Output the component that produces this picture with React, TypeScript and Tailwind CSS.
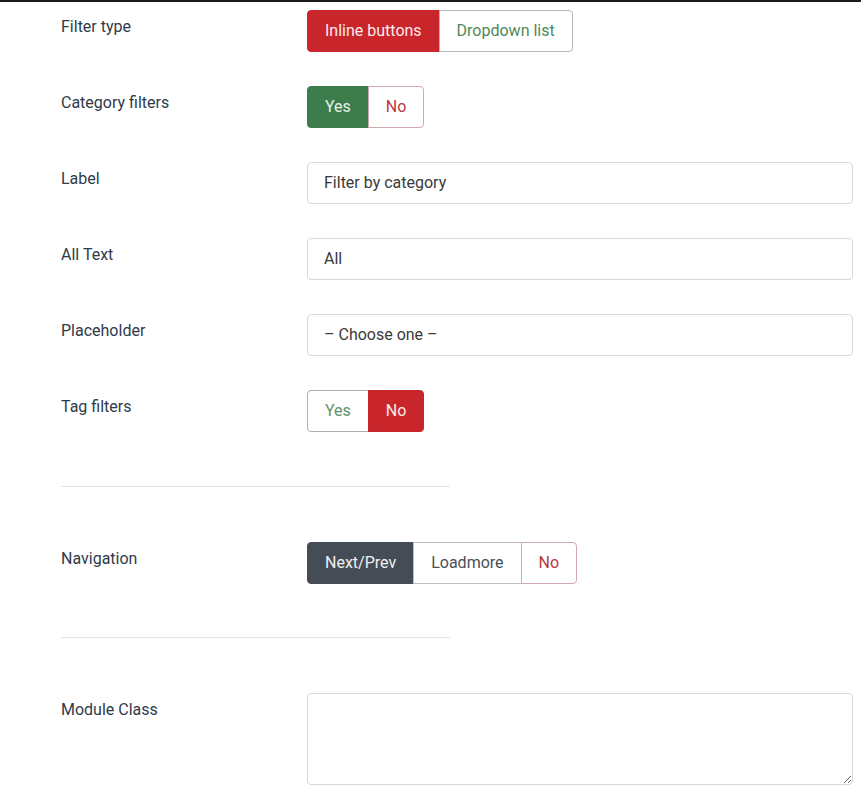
import React from 'react';

type Opt = { label: string; active?: string; idle: string; border: string };

function ButtonGroup({ options }: { options: Opt[] }) {
  return (
    <div className="flex h-[42px]">
      {options.map((o, i) => (
        <div
          key={o.label}
          className={`flex items-center px-[17px] border text-[16px] ${
            i === 0 ? 'rounded-l-[4px]' : '-ml-px'
          } ${i === options.length - 1 ? 'rounded-r-[4px]' : ''} ${o.active ? o.active : 'bg-white ' + o.idle} ${o.border}`}
        >
          {o.label}
        </div>
      ))}
    </div>
  );
}

function Row({ label, children }: { label: string; children: React.ReactNode }) {
  return (
    <div className="flex">
      <div className="w-[307px] shrink-0 pl-[61px] pt-[7px] text-[16px] leading-[20px] text-[#2f3a4a]">{label}</div>
      <div className="flex-1">{children}</div>
    </div>
  );
}

function TextInput({ value }: { value: string }) {
  return (
    <div className="h-[42px] border border-[#d8d8d8] rounded-[4px] flex items-center px-[16px] text-[16px] text-[#3a3a3a] bg-white">
      {value}
    </div>
  );
}

const red = 'bg-[#c8262a] text-[#fbeaea] border-[#c8262a]';
const green = 'bg-[#3d7d4c] text-[#e8f2ea] border-[#3d7d4c]';
const dark = 'bg-[#464c55] text-[#eef0f2] border-[#464c55]';

export default function App() {
  return (
    <div className="min-h-[788px] w-[861px] bg-white border-t-2 border-[#1c1c1c] pr-[8px] pt-[8px]" style={{ fontFamily: 'Roboto, "Liberation Sans", sans-serif' }}>
      <div className="flex flex-col gap-[34px]">
        <Row label="Filter type">
          <ButtonGroup
            options={[
              { label: 'Inline buttons', active: red, idle: '', border: '' },
              { label: 'Dropdown list', idle: 'text-[#4d8a5b]', border: 'border-[#b2b8b3]' },
            ]}
          />
        </Row>
        <Row label="Category filters">
          <ButtonGroup
            options={[
              { label: 'Yes', active: green, idle: '', border: '' },
              { label: 'No', idle: 'text-[#b83a3c]', border: 'border-[#d2a9ab]' },
            ]}
          />
        </Row>
        <Row label="Label">
          <TextInput value="Filter by category" />
        </Row>
        <Row label="All Text">
          <TextInput value="All" />
        </Row>
        <Row label="Placeholder">
          <TextInput value="– Choose one –" />
        </Row>
        <Row label="Tag filters">
          <ButtonGroup
            options={[
              { label: 'Yes', idle: 'text-[#5c9468]', border: 'border-[#a9b4ab]' },
              { label: 'No', active: red, idle: '', border: '' },
            ]}
          />
        </Row>
      </div>

      <div className="ml-[61px] mt-[54px] w-[389px] h-px bg-[#e3e3e3]" />

      <div className="mt-[55px]">
        <Row label="Navigation">
          <ButtonGroup
            options={[
              { label: 'Next/Prev', active: dark, idle: '', border: '' },
              { label: 'Loadmore', idle: 'text-[#4a4f57]', border: 'border-[#bfbfbf]' },
              { label: 'No', idle: 'text-[#b83a3c]', border: 'border-[#d2a9ab]' },
            ]}
          />
        </Row>
      </div>

      <div className="ml-[61px] mt-[53px] w-[389px] h-px bg-[#e3e3e3]" />

      <div className="mt-[55px]">
        <Row label="Module Class">
          <textarea className="block w-full h-[92px] border border-[#d8d8d8] rounded-[4px] bg-white outline-none" />
        </Row>
      </div>
    </div>
  );
}
